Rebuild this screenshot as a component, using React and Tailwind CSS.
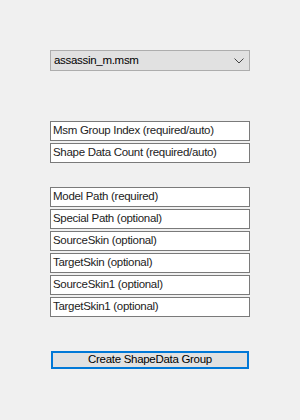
import React from "react";

const groupOne = ["Msm Group Index (required/auto)", "Shape Data Count (required/auto)"];
const groupTwo = [
  "Model Path (required)",
  "Special Path (optional)",
  "SourceSkin (optional)",
  "TargetSkin (optional)",
  "SourceSkin1 (optional)",
  "TargetSkin1 (optional)",
];

const Field = ({ value }) => {
  return (
    <div className="h-[20px] w-[200px] border border-[#7a7a7a] bg-white pl-[2px] flex items-center text-[11.5px] tracking-[-0.3px] text-[#222] leading-none whitespace-nowrap overflow-hidden">
      {value}
    </div>
  );
};

const App = () => {
  return (
    <div
      className="w-[300px] h-[420px] bg-[#f0f0f0] pl-[50px] pt-[50px] flex flex-col"
      style={{ fontFamily: '"Segoe UI", "Liberation Sans", Arial, sans-serif' }}
    >
      <div className="h-[21px] w-[200px] border border-[#adadad] bg-[#e1e1e1] flex items-center justify-between pl-[3px] pr-[4px] text-[11.5px] tracking-[-0.3px] text-black leading-none">
        <span>assassin_m.msm</span>
        <svg width="10" height="6" viewBox="0 0 10 6" className="mr-[1px]">
          <path d="M0.5 0.5 L5 5 L9.5 0.5" fill="none" stroke="#444" strokeWidth="1" />
        </svg>
      </div>

      <div className="mt-[50px] flex flex-col gap-[2px]">
        {groupOne.map((v) => (
          <Field key={v} value={v} />
        ))}
      </div>

      <div className="mt-[24px] flex flex-col gap-[2px]">
        {groupTwo.map((v) => (
          <Field key={v} value={v} />
        ))}
      </div>

      <button className="mt-[34px] ml-[1px] h-[18px] w-[198px] border-2 border-[#0078d7] bg-[#e1e1e1] flex items-center justify-center text-[11.5px] tracking-[-0.3px] text-black leading-none">
        Create ShapeData Group
      </button>
    </div>
  );
};

export default App;
